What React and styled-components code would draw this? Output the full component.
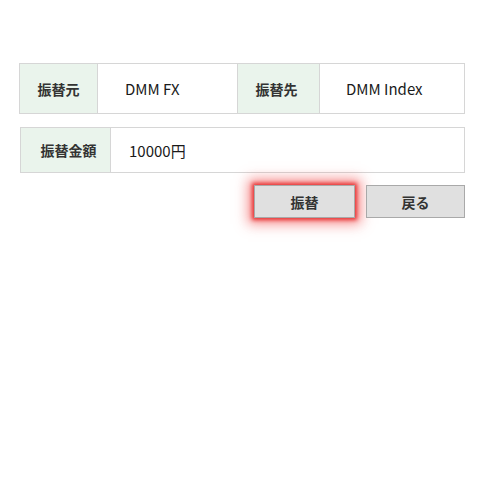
import React from "react";
import styled, { createGlobalStyle } from "styled-components";

const Global = createGlobalStyle`
  html, body { margin: 0; padding: 0; background: #fff; }
  body { font-family: "Noto Sans CJK JP", "DejaVu Sans", sans-serif; color: #222; }
`;

const Page = styled.div`
  width: 480px;
  height: 480px;
  box-sizing: border-box;
  padding: 63px 15px 0 19px;
  display: flex;
  flex-direction: column;
`;

const Table = styled.div`
  display: grid;
  grid-template-columns: ${(p) => p.$cols};
  height: ${(p) => p.$h}px;
  border: 1px solid #d6d6d6;
  box-sizing: border-box;
  margin: ${(p) => p.$m || "0"};
`;

const Label = styled.div`
  background: #eaf4ec;
  font-weight: bold;
  font-size: 14px;
  display: flex;
  align-items: center;
  justify-content: center;
  padding-left: ${(p) => p.$pl || 0}px;
  padding-right: ${(p) => p.$pr || 0}px;
  border-left: ${(p) => (p.$sep ? "1px solid #d6d6d6" : "none")};
  border-right: 1px solid #d6d6d6;
  color: #333;
`;

const Value = styled.div`
  display: flex;
  align-items: center;
  padding-left: ${(p) => p.$pl}px;
  font-size: 15px;
  color: #1a1a1a;
  background: #fff;
`;

const Actions = styled.div`
  display: flex;
  justify-content: flex-end;
  gap: 11px;
  margin-top: 12px;
`;

const Button = styled.button`
  width: ${(p) => p.$w}px;
  height: 33px;
  background: #e0e0e0;
  border: 1px solid #a9a9a9;
  border-radius: 0;
  font-family: "Noto Sans CJK JP", "DejaVu Sans", sans-serif;
  font-size: 14px;
  font-weight: bold;
  color: #333;
  padding: 0;
  box-shadow: ${(p) =>
    p.$glow
      ? "0 0 4px 2px rgba(228, 30, 30, 0.85), 0 0 12px 6px rgba(240, 60, 60, 0.55)"
      : "none"};
`;

export default function App() {
  return (
    <>
      <Global />
      <Page>
        <Table $cols="78px 139px 83px 1fr" $h={51}>
          <Label>振替元</Label>
          <Value $pl={27}>DMM FX</Value>
          <Label $sep $pr={4}>振替先</Label>
          <Value $pl={26}>DMM Index</Value>
        </Table>
        <Table $cols="90px 1fr" $h={46} $m="13px 0 0 1px">
          <Label $pl={6}>振替金額</Label>
          <Value $pl={18}>10000円</Value>
        </Table>
        <Actions>
          <Button $w={101} $glow>振替</Button>
          <Button $w={99}>戻る</Button>
        </Actions>
      </Page>
    </>
  );
}
